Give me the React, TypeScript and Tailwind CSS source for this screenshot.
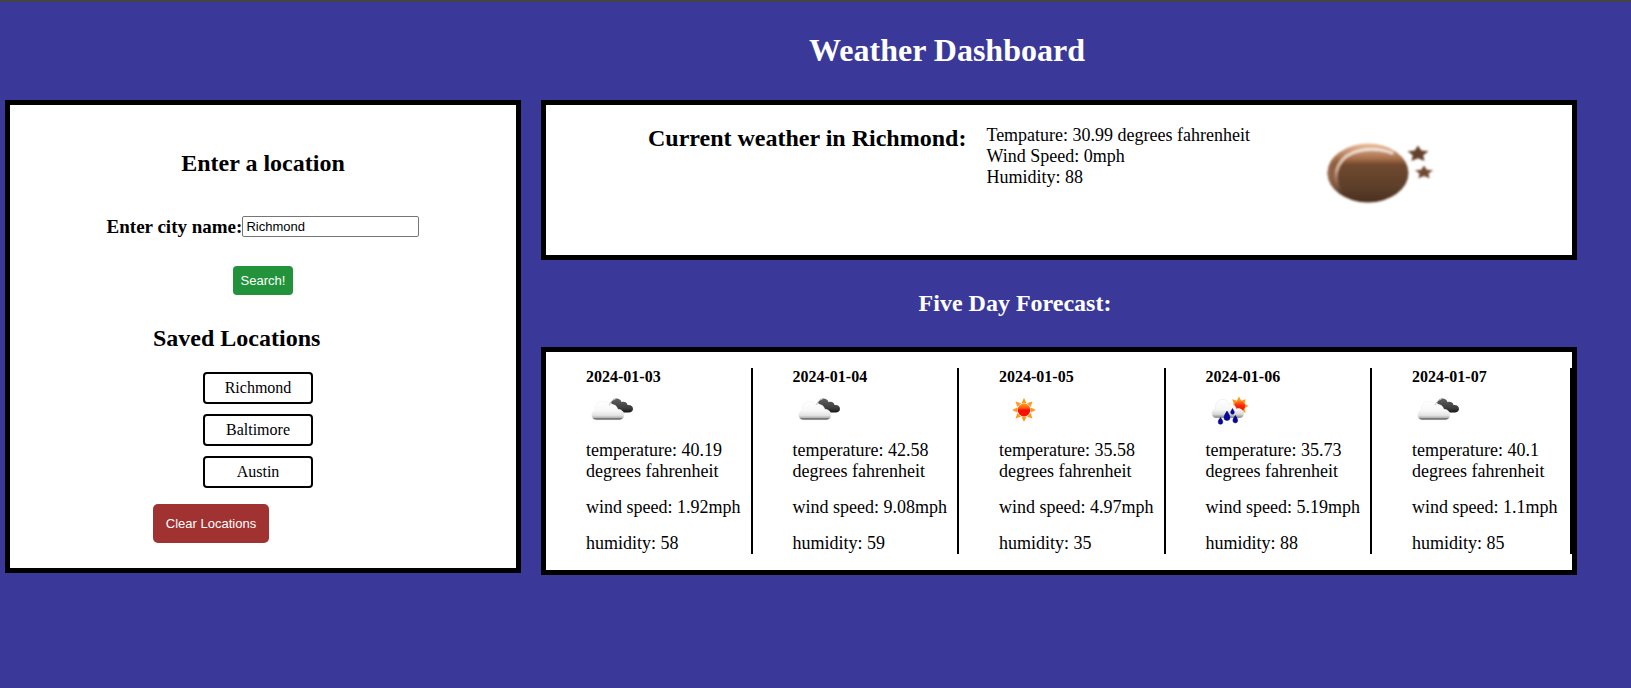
import React from "react";

type Condition = "cloudy" | "sunny" | "rain";

interface Forecast {
  date: string;
  condition: Condition;
  temperature: string;
  wind: string;
  humidity: number;
}

const forecasts: Forecast[] = [
  { date: "2024-01-03", condition: "cloudy", temperature: "40.19", wind: "1.92", humidity: 58 },
  { date: "2024-01-04", condition: "cloudy", temperature: "42.58", wind: "9.08", humidity: 59 },
  { date: "2024-01-05", condition: "sunny", temperature: "35.58", wind: "4.97", humidity: 35 },
  { date: "2024-01-06", condition: "rain", temperature: "35.73", wind: "5.19", humidity: 88 },
  { date: "2024-01-07", condition: "cloudy", temperature: "40.1", wind: "1.1", humidity: 85 },
];

const savedLocations = ["Richmond", "Baltimore", "Austin"];

function starPoints(cx: number, cy: number, rx: number, ry: number, inner: number) {
  return Array.from({ length: 10 }, (_, i) => {
    const k = i % 2 ? inner : 1;
    const a = (i * Math.PI) / 5 - Math.PI / 2;
    return `${(cx + rx * k * Math.cos(a)).toFixed(2)},${(cy + ry * k * Math.sin(a)).toFixed(2)}`;
  }).join(" ");
}

function MoonIcon() {
  return (
    <svg viewBox="0 0 200 150" className="h-[150px] w-[200px] shrink-0" aria-hidden="true">
      <defs>
        <linearGradient id="moon-fill" x1="0" y1="0" x2="0" y2="1">
          <stop offset="0" stopColor="#f0c09a" />
          <stop offset="0.12" stopColor="#c99877" />
          <stop offset="0.25" stopColor="#a9714c" />
          <stop offset="0.36" stopColor="#70492f" />
          <stop offset="0.75" stopColor="#5c3e2a" />
          <stop offset="1" stopColor="#4a2f20" />
        </linearGradient>
        <linearGradient id="moon-shine" x1="0" y1="0" x2="0" y2="1">
          <stop offset="0" stopColor="#f3e3d8" />
          <stop offset="0.5" stopColor="#cfa68c" />
          <stop offset="1" stopColor="#8b5f43" stopOpacity="0.2" />
        </linearGradient>
        <linearGradient id="moon-rim" x1="0" y1="0" x2="1" y2="0">
          <stop offset="0" stopColor="#a87355" stopOpacity="0.8" />
          <stop offset="0.08" stopColor="#a87355" stopOpacity="0.5" />
          <stop offset="0.15" stopColor="#a87355" stopOpacity="0" />
        </linearGradient>
        <filter id="moon-soft" x="-10%" y="-10%" width="120%" height="120%">
          <feGaussianBlur stdDeviation="1.1" />
        </filter>
      </defs>
      <g filter="url(#moon-soft)">
        <ellipse cx="98" cy="68" rx="40.500" ry="29.500" fill="url(#moon-fill)" />
        <ellipse cx="98" cy="68" rx="40.500" ry="29.500" fill="url(#moon-rim)" />
        <path
          d="M70 86C60 68 69 50 90 45.500C100 43.500 112 44 122 48"
          fill="none"
          stroke="url(#moon-shine)"
          strokeWidth="3.200"
          strokeLinecap="round"
        />
        <polygon points={starPoints(148, 49, 11, 8.5, 0.5)} fill="#63402b" />
        <polygon points={starPoints(154, 67.5, 9.5, 7, 0.5)} fill="#704a32" />
      </g>
    </svg>
  );
}

function SunIcon() {
  return (
    <svg viewBox="0 0 50 50" className="size-[50px]" aria-hidden="true">
      <defs>
        <linearGradient id="sun-fill" x1="0" y1="0" x2="0" y2="1">
          <stop offset="0" stopColor="#ff9c1a" />
          <stop offset="0.35" stopColor="#ff5a10" />
          <stop offset="0.5" stopColor="#fb0d05" />
          <stop offset="1" stopColor="#ff1400" />
        </linearGradient>
      </defs>
      {[0, 45, 90, 135, 180, 225, 270, 315].map((angle) => (
        <path
          key={angle}
          d="M25 12L27.600 17.200H22.400Z"
          fill="#ff9a1a"
          transform={`rotate(${angle} 25 24)`}
        />
      ))}
      <circle cx="25" cy="24" r="6.400" fill="url(#sun-fill)" />
    </svg>
  );
}

function CloudIcon({ id }: { id: string }) {
  return (
    <svg viewBox="0 0 50 50" className="size-[50px]" aria-hidden="true">
      <defs>
        <linearGradient id={`${id}-light`} x1="0" y1="0" x2="0" y2="1">
          <stop offset="0" stopColor="#ffffff" />
          <stop offset="0.5" stopColor="#f8f8f8" />
          <stop offset="0.75" stopColor="#e4e4e4" />
          <stop offset="0.88" stopColor="#b4b4b4" />
          <stop offset="0.92" stopColor="#787878" />
          <stop offset="1" stopColor="#6f6f6f" />
        </linearGradient>
        <linearGradient id={`${id}-dark`} x1="0" y1="0" x2="0" y2="1">
          <stop offset="0" stopColor="#606060" />
          <stop offset="0.7" stopColor="#3c3c3c" />
          <stop offset="1" stopColor="#151515" />
        </linearGradient>
      </defs>
      <path
        d="M25 17C26 13.500 28.500 12 31 12.500C33.500 12.800 35 14.300 35.600 16.200C38 15.200 41 16.500 41.500 19C44.500 18.500 47 20 47 22.800C47 25.300 45 26.500 42.800 26.500H34C32.500 25.500 31.500 24 31.500 22.500L30 21.500Z"
        fill={`url(#${id}-dark)`}
      />
      <path d="M23.300 19.500C24 16.500 26 13.500 29.500 13.300" fill="none" stroke="#bdbdbd" strokeWidth="1" />
      <path
        d="M10 34C7.300 34 5.700 31.800 5.700 29.300C5.700 26.800 7.200 24.800 9.400 24C8.900 18.800 12.300 15.300 16.500 15.300C20 15.300 22 17 23 19.500C25.500 17.800 30.500 18 31.700 23.300C35.500 23.200 38 25.800 38 29.300C38 32 36.300 34 33.500 34Z"
        fill={`url(#${id}-light)`}
        stroke="#ececec"
        strokeWidth="0.500"
      />
    </svg>
  );
}

function RainIcon() {
  return (
    <svg viewBox="0 0 50 50" className="size-[50px]" aria-hidden="true">
      <defs>
        <linearGradient id="rain-cloud" x1="0" y1="0" x2="0" y2="1">
          <stop offset="0" stopColor="#ffffff" />
          <stop offset="0.55" stopColor="#f6f6f6" />
          <stop offset="0.8" stopColor="#d8d8d8" />
          <stop offset="0.92" stopColor="#a0a0a0" />
          <stop offset="1" stopColor="#6f6f6f" />
        </linearGradient>
        <linearGradient id="rain-sun" x1="0" y1="0" x2="0" y2="1">
          <stop offset="0" stopColor="#ff8a1a" />
          <stop offset="0.5" stopColor="#fb2008" />
          <stop offset="1" stopColor="#ff1400" />
        </linearGradient>
      </defs>
      {[0, 45, 90, 135, 225, 270, 315].map((angle) => (
        <path
          key={angle}
          d="M33 10.500L35.400 15H30.600Z"
          fill="#ff9a1a"
          transform={`rotate(${angle} 33 20)`}
        />
      ))}
      <circle cx="33.500" cy="20" r="5.600" fill="url(#rain-sun)" />
      <path
        d="M10 32C7.500 32 6 30 6 27.500C6 25.300 7.300 23.500 9.300 22.800C9 17 12.500 13.500 16.800 13.500C20.500 13.500 22.500 15.500 23.300 18C26 16.800 29.500 18.800 30.300 23C33.500 21.500 37.800 24 37.800 27.500C37.800 30.300 36.300 32 33.500 32Z"
        fill="url(#rain-cloud)"
        stroke="#e4e4e4"
        strokeWidth="0.500"
      />
      <g fill="#0505a8" stroke="#02025c" strokeWidth="0.500">
        <path d="M21 25C22.500 27.500 24 29.500 24 31.500A3 3 0 0 1 18 31.500C18 29.500 19.500 27.500 21 25Z" />
        <path d="M26.500 22.500C27.500 24.200 28.300 25.300 28.300 26.500A1.800 1.800 0 0 1 24.700 26.500C24.700 25.300 25.500 24.200 26.500 22.500Z" />
        <path d="M14.500 31.500C15.700 33.300 16.800 34.500 16.800 36A2.300 2.300 0 0 1 12.200 36C12.200 34.500 13.300 33.300 14.500 31.500Z" />
        <path d="M29.300 29.500C30.500 31.300 31.700 33 31.700 34.500A2.400 2.400 0 0 1 26.900 34.500C26.900 33 28.100 31.300 29.300 29.500Z" />
      </g>
    </svg>
  );
}

function ForecastIcon({ condition, id }: { condition: Condition; id: string }) {
  if (condition === "sunny") return <SunIcon />;
  if (condition === "rain") return <RainIcon />;
  return <CloudIcon id={id} />;
}

function SearchPanel() {
  return (
    <aside className="border-5 border-black bg-white pt-11 pb-[25px]">
      <form className="flex flex-col items-center" onSubmit={(e) => e.preventDefault()}>
        <h2 className="text-2xl leading-7 font-bold">Enter a location</h2>
        <div className="mt-[39px] flex items-center">
          <label htmlFor="city" className="text-[19px] leading-[21px] font-bold">
            Enter city name:
          </label>
          <input
            id="city"
            type="text"
            defaultValue="Richmond"
            className="h-[21px] w-[177px] rounded-[2px] border border-[#767676] bg-white px-[3px] font-['Liberation_Sans',Arial,sans-serif] text-[13px]"
          />
        </div>
        <button
          type="submit"
          className="mt-[29px] h-[29px] w-[60px] rounded-[4px] bg-[#23933b] font-['Liberation_Sans',Arial,sans-serif] text-[13px] text-white"
        >
          Search!
        </button>
      </form>
      <section className="mx-auto mt-[29px] w-[220px]">
        <h2 className="text-2xl leading-7 font-bold">Saved Locations</h2>
        <ul className="mt-5 ml-[50px] flex w-[110px] flex-col gap-[10px]">
          {savedLocations.map((city) => (
            <li key={city}>
              <button
                type="button"
                className="block h-8 w-full rounded-[4px] border-2 border-black bg-white text-base leading-7"
              >
                {city}
              </button>
            </li>
          ))}
        </ul>
        <button
          type="button"
          className="mt-4 h-[39px] w-[116px] rounded-[5px] bg-[#a03232] font-['Liberation_Sans',Arial,sans-serif] text-[13px] text-white"
        >
          Clear Locations
        </button>
      </section>
    </aside>
  );
}

export default function App() {
  return (
    <div className="min-h-screen border-t-2 border-[#444444] bg-[#3a3999] font-['Liberation_Serif','Times_New_Roman',serif] text-black">
      <header className="pt-[30px] pb-8 pl-[263px] text-center text-white">
        <h1 className="text-[32px] leading-9 font-bold">Weather Dashboard</h1>
      </header>
      <div className="grid grid-cols-[minmax(0,516fr)_minmax(0,1036fr)] items-start gap-5 pr-[54px] pl-[5px]">
        <SearchPanel />
        <main>
          <section className="flex justify-center gap-5 border-5 border-black bg-white">
            <h2 className="pt-[19px] text-2xl leading-7 font-bold">Current weather in Richmond:</h2>
            <div className="pt-5 text-lg leading-[21px]">
              <p>Tempature: 30.99 degrees fahrenheit</p>
              <p>Wind Speed: 0mph</p>
              <p>Humidity: 88</p>
            </div>
            <MoonIcon />
          </section>
          <h2 className="pt-[29px] pr-[88px] pb-[30px] text-center text-2xl leading-7 font-bold text-white">
            Five Day Forecast:
          </h2>
          <section className="flex border-5 border-black bg-white py-4">
            {forecasts.map((day) => (
              <article key={day.date} className="flex-1 border-r-2 border-black pr-[10px] pl-10">
                <h3 className="text-base leading-[18px] font-bold">{day.date}</h3>
                <ForecastIcon condition={day.condition} id={`cloud-${day.date}`} />
                <div className="flex flex-col gap-[15px] pt-1 text-lg leading-[21px]">
                  <p>
                    temperature: {day.temperature}
                    <br />
                    degrees fahrenheit
                  </p>
                  <p className="whitespace-nowrap">wind speed: {day.wind}mph</p>
                  <p>humidity: {day.humidity}</p>
                </div>
              </article>
            ))}
          </section>
        </main>
      </div>
    </div>
  );
}
